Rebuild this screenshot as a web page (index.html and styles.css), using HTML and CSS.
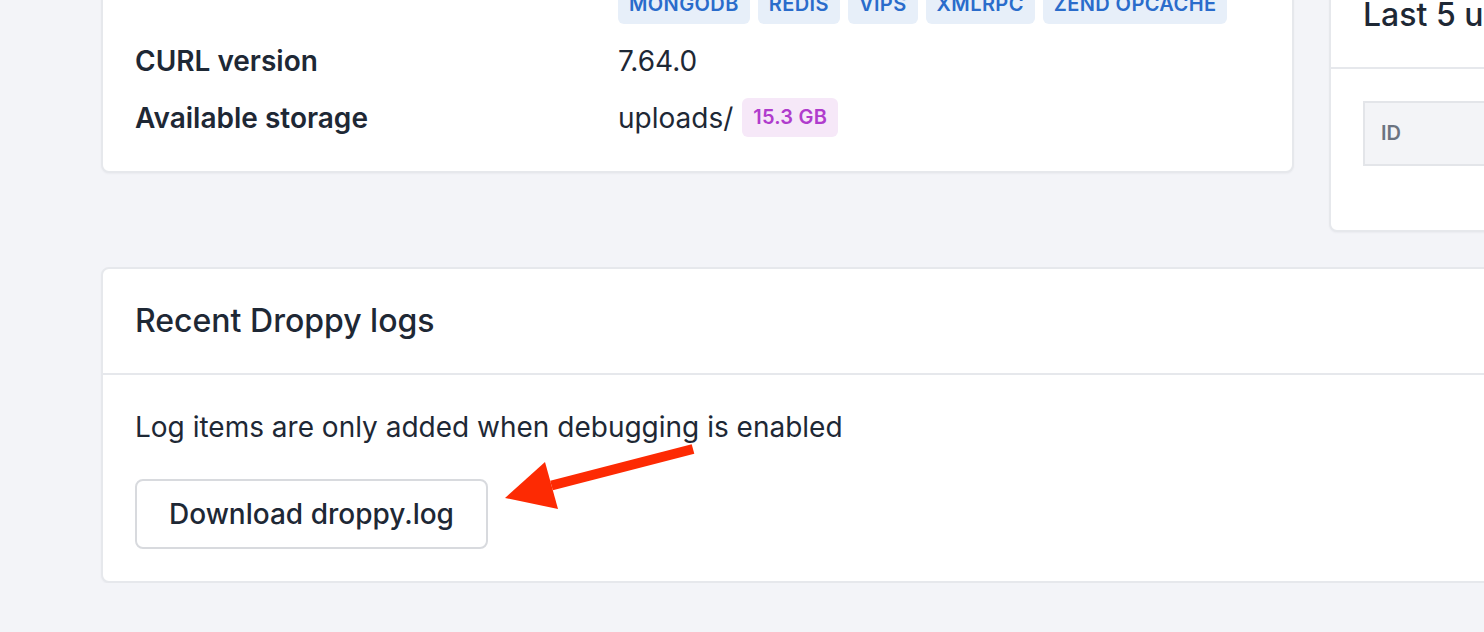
FILE: index.html
```html
<!DOCTYPE html>
<html lang="en">
<head>
    <meta charset="utf-8" />
    <meta name="viewport" content="width=device-width, initial-scale=1.0" />
    <link rel="stylesheet" href="styles.css">
    <title>Droppy - Admin dashboard</title>
</head>
<body>
    <div class="dashboard">
        <div class="card info-card">
            <div class="info-row">
                <div class="info-label top">PHP extensions</div>
                <div class="badges">
                    <span class="badge">CURL</span>
                    <span class="badge">FILEINFO</span>
                    <span class="badge">GD</span>
                    <span class="badge">IMAGICK</span>
                    <span class="badge">MBSTRING</span>
                    <span class="badge">MYSQLI</span>
                    <span class="badge">MONGODB</span>
                    <span class="badge">REDIS</span>
                    <span class="badge">VIPS</span>
                    <span class="badge">XMLRPC</span>
                    <span class="badge">ZEND OPCACHE</span>
                </div>
            </div>
            <div class="info-row">
                <div class="info-label">CURL version</div>
                <div class="info-value">7.64.0</div>
            </div>
            <div class="info-row">
                <div class="info-label">Available storage</div>
                <div class="info-value">uploads/ <span class="badge badge-purple">15.3 GB</span></div>
            </div>
        </div>

        <div class="card uploads-card">
            <div class="card-header">
                <h3 class="card-title">Last 5 uploads</h3>
            </div>
            <div class="card-body">
                <table class="table">
                    <thead>
                        <tr>
                            <th class="col-id">ID</th>
                            <th>Files</th>
                            <th>Size</th>
                        </tr>
                    </thead>
                    <tbody>
                        <tr class="empty"><td colspan="3"></td></tr>
                    </tbody>
                </table>
            </div>
        </div>

        <div class="card logs-card">
            <div class="card-header">
                <h3 class="card-title">Recent Droppy logs</h3>
            </div>
            <div class="card-body">
                <p class="muted-text">Log items are only added when debugging is enabled</p>
                <button class="btn">Download droppy.log</button>
            </div>
            <!-- markup arrow from the screenshot -->
            <svg class="arrow" width="210" height="85" viewBox="0 0 210 85">
                <polygon points="199.3,18.8 196.7,9.2 55.2,45.7 57.8,55.3" fill="#fd2a03" />
                <polygon points="10,63 50,27 63,74" fill="#fd2a03" />
            </svg>
        </div>
    </div>
</body>
</html>
```

FILE: styles.css
```css
html, body {
    overflow: hidden;
}

body {
    margin: 0;
    background-color: #f3f4f8;
    font-family: 'Inter', 'Noto Sans', sans-serif;
    color: #1e2835;
}

.dashboard {
    display: grid;
    grid-template-columns: 1193px 460px;
    align-items: start;
    gap: 35px;
    margin-top: -96px;
    padding-left: 101px;
    width: max-content;
}

.card {
    background-color: #ffffff;
    border: 2px solid #e6e8ec;
    border-radius: 8px;
    box-shadow: 0 1px 2px rgba(20, 30, 50, 0.04);
}

.card-header {
    padding: 33px 32px;
    border-bottom: 2px solid #e6e8ec;
}

.card-title {
    margin: 0;
    font-size: 32px;
    line-height: 38px;
    font-weight: 500;
}

.card-body {
    padding: 32px;
}

/* server info */
.info-card {
    padding: 32px 32px 34px;
    display: flex;
    flex-direction: column;
    gap: 18px;
}

.info-row {
    display: grid;
    grid-template-columns: 483px 1fr;
    align-items: center;
    min-height: 38px;
}

.info-label {
    font-size: 28px;
    font-weight: 600;
}

.info-label.top {
    align-self: start;
    line-height: 39px;
}

.info-value {
    font-size: 28px;
    display: flex;
    align-items: center;
    gap: 9px;
}

.badges {
    display: flex;
    flex-wrap: wrap;
    gap: 8px;
}

.badge {
    display: inline-block;
    padding: 8px 11px;
    font-size: 20px;
    line-height: 23px;
    font-weight: 600;
    letter-spacing: 0.02em;
    color: #2a6ccb;
    background-color: #e7eff9;
    border-radius: 6px;
}

.badge-purple {
    letter-spacing: 0.01em;
    color: #b03ccd;
    background-color: #f6e8f8;
}

/* uploads */
.uploads-card {
    margin-top: 57px;
}

.table {
    width: 100%;
    border-collapse: collapse;
    margin-bottom: 32px;
}

.table th {
    text-align: left;
    padding: 20px 16px;
    font-size: 20px;
    line-height: 21px;
    font-weight: 600;
    color: #6b7380;
    background-color: #f3f4f7;
    border-top: 2px solid #e3e5e9;
    border-bottom: 2px solid #e3e5e9;
}

.table th.col-id {
    width: 160px;
    border-left: 2px solid #e3e5e9;
}

.table .empty td {
    padding: 0;
}

/* logs */
.logs-card {
    grid-column: 1 / -1;
    position: relative;
}

.muted-text {
    margin: 0 0 32px;
    font-size: 28px;
    line-height: 40px;
}

.btn {
    font-family: 'Inter', 'Noto Sans', sans-serif;
    font-size: 28px;
    line-height: 30px;
    font-weight: 500;
    color: #1e2835;
    background-color: #ffffff;
    border: 2px solid #d8dade;
    border-radius: 8px;
    padding: 18px 32px;
    cursor: pointer;
}

.arrow {
    position: absolute;
    left: 392px;
    top: 166px;
}
```
